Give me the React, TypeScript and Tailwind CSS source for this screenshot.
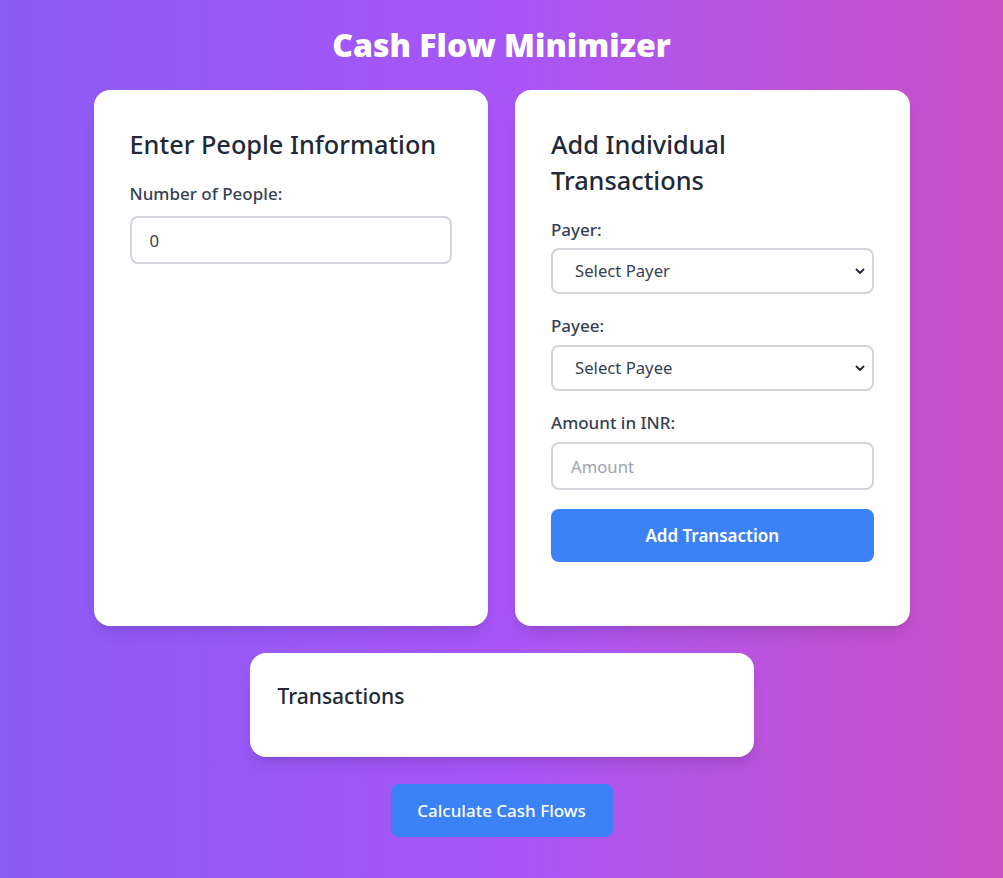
import type { ReactNode } from "react";

const font = { fontFamily: '"Noto Sans", "Open Sans", Arial, sans-serif' };

function Label({ children, className = "" }: { children: ReactNode; className?: string }) {
  return (
    <label className={`block text-[17px] leading-6 font-medium text-[#374151] ${className}`}>
      {children}
    </label>
  );
}

function Select({ placeholder }: { placeholder: string }) {
  return (
    <div className="relative">
      <select
        defaultValue=""
        className="w-full h-[46px] appearance-none rounded-lg border-2 border-[#d1d5db] bg-white pl-[22px] pr-10 text-[16.7px] text-[#374151] outline-none"
      >
        <option value="">{placeholder}</option>
      </select>
      {/* chevron */}
      <svg
        className="pointer-events-none absolute right-[8px] top-1/2 -translate-y-1/2"
        width="12"
        height="12"
        viewBox="0 0 12 12"
        fill="none"
      >
        <path d="M2.5 4.5 L6 8 L9.5 4.5" stroke="#1f2937" strokeWidth="1.8" strokeLinecap="round" strokeLinejoin="round" />
      </svg>
    </div>
  );
}

export default function App() {
  return (
    <div
      className="min-h-[878px] w-full bg-gradient-to-r from-[#8b5cf6] via-[#a855f7] to-[#c94fc5] pt-[21px] pb-10"
      style={font}
    >
      <h1 className="text-center text-[32px] leading-[48px] font-black text-white mb-[21px]">
        Cash Flow Minimizer
      </h1>

      <div className="mx-auto w-[816px] grid grid-cols-2 gap-[27px]">
        {/* people info */}
        <div className="rounded-2xl bg-white shadow-lg px-9 pt-9">
          <h2 className="text-[25.3px] leading-9 font-medium text-[#1f2937] mb-5">
            Enter People Information
          </h2>
          <Label className="mb-2.5">Number of People:</Label>
          <input
            type="number"
            defaultValue={0}
            className="w-full h-[48px] rounded-lg border-2 border-[#d1d5db] bg-white pl-[18px] text-[16.7px] text-[#374151] outline-none"
          />
        </div>

        {/* transactions form */}
        <div className="rounded-2xl bg-white shadow-lg px-9 pt-9 pb-16">
          <h2 className="text-[25.3px] leading-9 font-medium text-[#1f2937] mb-5">
            Add Individual Transactions
          </h2>
          <Label className="mb-1.5">Payer:</Label>
          <Select placeholder="Select Payer" />
          <Label className="mt-5 mb-[7px]">Payee:</Label>
          <Select placeholder="Select Payee" />
          <Label className="mt-5 mb-[7px]">Amount in INR:</Label>
          <input
            type="number"
            placeholder="Amount"
            className="w-full h-[48px] rounded-lg border-2 border-[#d1d5db] bg-white pl-[18px] text-[16.7px] text-[#374151] placeholder:text-[#9ca3af] outline-none"
          />
          <button className="mt-[19px] w-full h-[53px] rounded-lg bg-[#3b82f6] text-[17px] font-semibold text-white">
            Add Transaction
          </button>
        </div>
      </div>

      <div className="mx-auto mt-[27px] w-[504px] rounded-2xl bg-white shadow-lg px-7 pt-7 pb-[46px]">
        <h3 className="text-[21px] leading-[30px] font-medium text-[#1f2937]">Transactions</h3>
      </div>

      <div className="mt-[27px] flex justify-center">
        <button className="w-[222px] h-[53px] rounded-lg bg-[#3b82f6] text-[17px] font-medium text-white">
          Calculate Cash Flows
        </button>
      </div>
    </div>
  );
}
